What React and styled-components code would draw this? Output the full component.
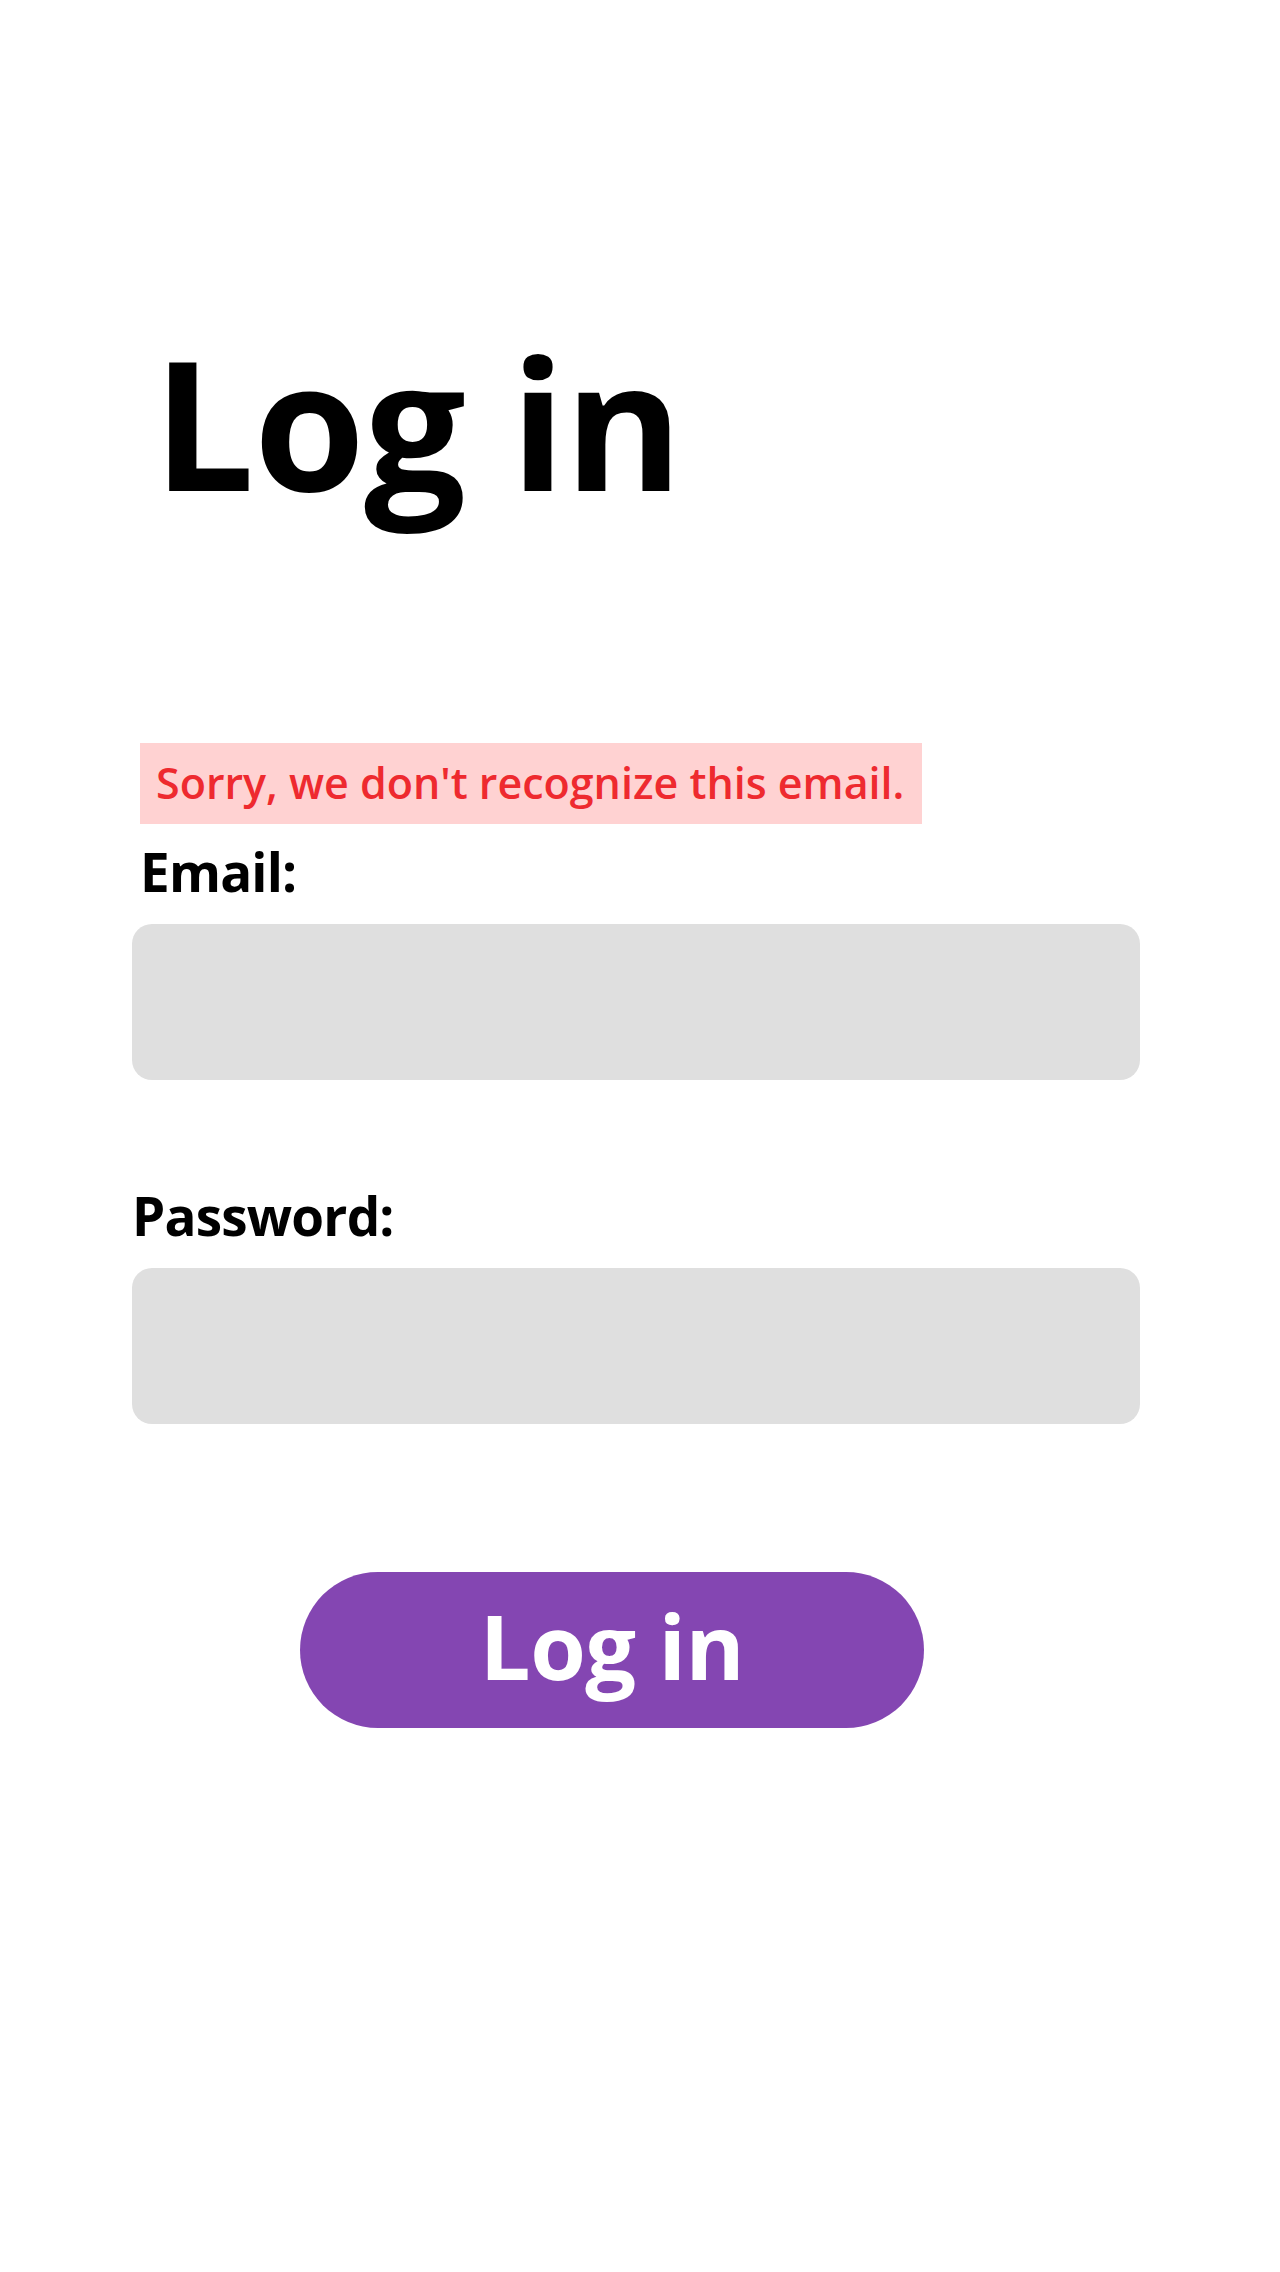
import React from 'react';
import styled, { createGlobalStyle } from 'styled-components';

const GlobalStyle = createGlobalStyle`
  body {
    margin: 0;
    background: #ffffff;
    font-family: 'Open Sans', 'Noto Sans', sans-serif;
    color: #000000;
  }
  * {
    box-sizing: border-box;
  }
`;

const Page = styled.div`
  min-height: 2272px;
  padding: 332px 0 0 132px;
`;

const Form = styled.form`
  width: 1008px;
  display: flex;
  flex-direction: column;
  align-items: flex-start;
`;

const Title = styled.h1`
  margin: 0 0 231px 21px;
  font-size: 180px;
  font-weight: 700;
  line-height: 1;
  letter-spacing: -1px;
`;

const ErrorMsg = styled.p`
  margin: 0 0 21px 8px;
  padding: 18px 18px 20px 16px;
  background: #ffd2d2;
  color: #ee2a2f;
  font-size: 43px;
  font-weight: 600;
  line-height: 1;
`;

const Label = styled.label`
  margin: 0 0 26px ${(p) => p.$indent || 0}px;
  font-size: 53px;
  font-weight: 700;
  line-height: 1;
  letter-spacing: -0.8px;
`;

const Field = styled.input`
  width: 100%;
  height: 156px;
  margin-bottom: ${(p) => p.$gap || 0}px;
  border: none;
  border-radius: 20px;
  background: #dfdfdf;
  outline: none;
  font-family: inherit;
  font-size: 40px;
  padding: 0 24px;
`;

const SubmitButton = styled.button`
  margin-left: 168px;
  width: 624px;
  height: 156px;
  padding: 0 0 10px;
  border: none;
  border-radius: 78px;
  background: #8446b2;
  color: #ffffff;
  font-family: inherit;
  font-size: 90px;
  font-weight: 700;
  line-height: 146px;
  letter-spacing: -0.5px;
  cursor: pointer;
`;

export default function App() {
  return (
    <>
      <GlobalStyle />
      <Page>
        <Form onSubmit={(e) => e.preventDefault()}>
          <Title>Log in</Title>
          <ErrorMsg>Sorry, we don't recognize this email.</ErrorMsg>
          <Label htmlFor="email" $indent={8}>
            Email:
          </Label>
          <Field id="email" type="email" $gap={109} />
          <Label htmlFor="password">Password:</Label>
          <Field id="password" type="password" $gap={148} />
          <SubmitButton type="submit">Log in</SubmitButton>
        </Form>
      </Page>
    </>
  );
}
